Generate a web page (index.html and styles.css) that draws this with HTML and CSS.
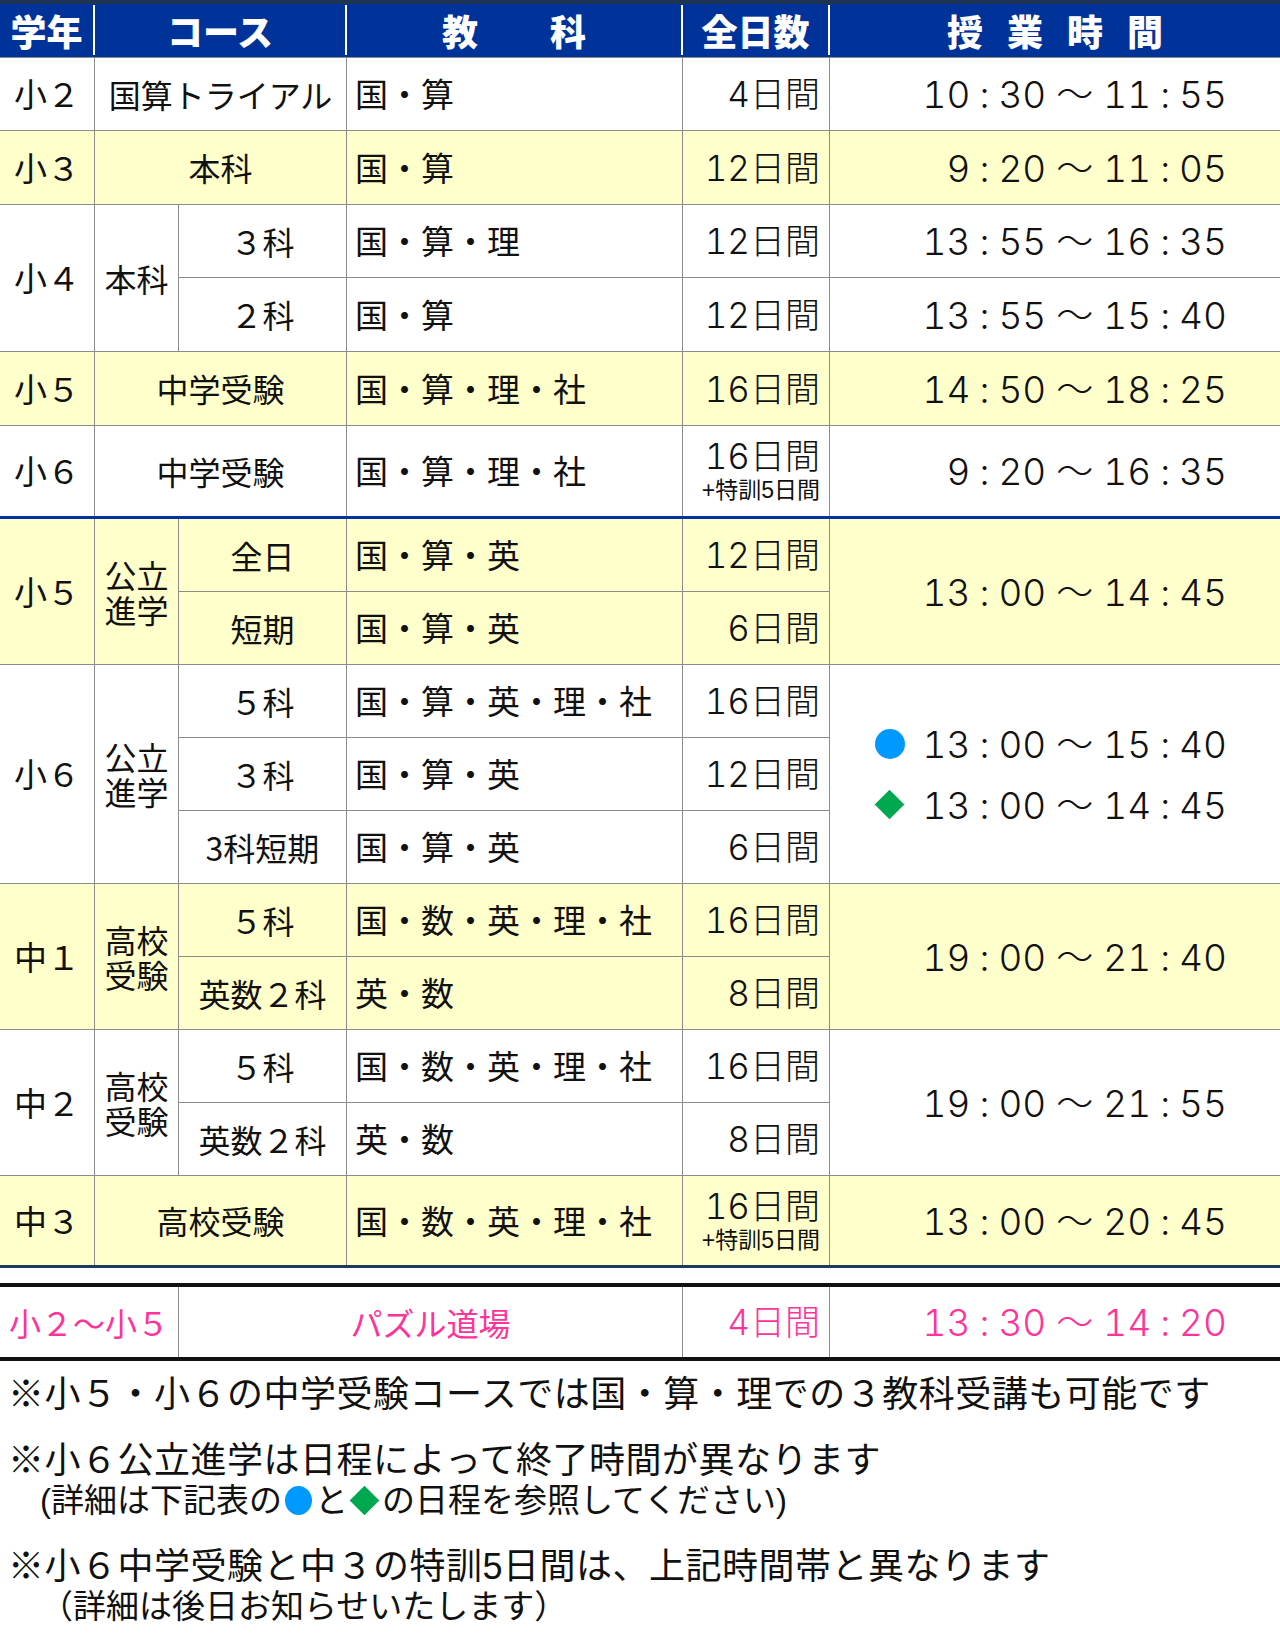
FILE: index.html
```html
<!DOCTYPE html>
<html lang="ja">
<head>
<meta charset="utf-8">
<title>授業時間</title>
<link rel="stylesheet" href="styles.css">
</head>
<body>
<div class="page">
  <div class="head">
    <div class="hc">学年</div>
    <div class="hc">コース</div>
    <div class="hc">教　　科</div>
    <div class="hc">全日数</div>
    <div class="hc last ls">授業時間</div>
  </div>

  <div class="grid">
    <!-- 小2 -->
    <div class="cell g">小２</div>
    <div class="cell c cs2">国算トライアル</div>
    <div class="cell s">国・算</div>
    <div class="cell d">4日間</div>
    <div class="cell t end"><span class="tm">10<span class="co">:</span>30<span class="wv">～</span>11<span class="co">:</span>55</span></div>
    <!-- 小3 -->
    <div class="cell g y">小３</div>
    <div class="cell c cs2 y">本科</div>
    <div class="cell s y">国・算</div>
    <div class="cell d y">12日間</div>
    <div class="cell t end y"><span class="tm">9<span class="co">:</span>20<span class="wv">～</span>11<span class="co">:</span>05</span></div>
    <!-- 小4 -->
    <div class="cell g rs2">小４</div>
    <div class="cell c rs2">本科</div>
    <div class="cell c">３科</div>
    <div class="cell s">国・算・理</div>
    <div class="cell d">12日間</div>
    <div class="cell t end"><span class="tm">13<span class="co">:</span>55<span class="wv">～</span>16<span class="co">:</span>35</span></div>
    <div class="cell c">２科</div>
    <div class="cell s">国・算</div>
    <div class="cell d">12日間</div>
    <div class="cell t end"><span class="tm">13<span class="co">:</span>55<span class="wv">～</span>15<span class="co">:</span>40</span></div>
    <!-- 小5 -->
    <div class="cell g y">小５</div>
    <div class="cell c cs2 y">中学受験</div>
    <div class="cell s y">国・算・理・社</div>
    <div class="cell d y">16日間</div>
    <div class="cell t end y"><span class="tm">14<span class="co">:</span>50<span class="wv">～</span>18<span class="co">:</span>25</span></div>
    <!-- 小6 -->
    <div class="cell g nb">小６</div>
    <div class="cell c cs2 nb">中学受験</div>
    <div class="cell s nb">国・算・理・社</div>
    <div class="cell d nb"><div class="dd"><div class="dm">16日間</div><div class="sm">+特訓5日間</div></div></div>
    <div class="cell t end nb"><span class="tm">9<span class="co">:</span>20<span class="wv">～</span>16<span class="co">:</span>35</span></div>

    <div class="sep sep-blue"></div>

    <!-- 小5 公立進学 -->
    <div class="cell g y rs2">小５</div>
    <div class="cell c y rs2"><div class="stack">公立進学</div></div>
    <div class="cell c y">全日</div>
    <div class="cell s y">国・算・英</div>
    <div class="cell d y">12日間</div>
    <div class="cell t end y rs2"><span class="tm">13<span class="co">:</span>00<span class="wv">～</span>14<span class="co">:</span>45</span></div>
    <div class="cell c y">短期</div>
    <div class="cell s y">国・算・英</div>
    <div class="cell d y">6日間</div>
    <!-- 小6 公立進学 -->
    <div class="cell g rs3">小６</div>
    <div class="cell c rs3"><div class="stack">公立進学</div></div>
    <div class="cell c">５科</div>
    <div class="cell s">国・算・英・理・社</div>
    <div class="cell d">16日間</div>
    <div class="cell t end rs3">
      <div class="tl2">
        <div class="tline"><span class="mk circ"></span><span class="tm">13<span class="co">:</span>00<span class="wv">～</span>15<span class="co">:</span>40</span></div>
        <div class="tline"><span class="mk dia"></span><span class="tm">13<span class="co">:</span>00<span class="wv">～</span>14<span class="co">:</span>45</span></div>
      </div>
    </div>
    <div class="cell c">３科</div>
    <div class="cell s">国・算・英</div>
    <div class="cell d">12日間</div>
    <div class="cell c">3科短期</div>
    <div class="cell s">国・算・英</div>
    <div class="cell d">6日間</div>
    <!-- 中1 -->
    <div class="cell g y rs2">中１</div>
    <div class="cell c y rs2"><div class="stack">高校受験</div></div>
    <div class="cell c y">５科</div>
    <div class="cell s y">国・数・英・理・社</div>
    <div class="cell d y">16日間</div>
    <div class="cell t end y rs2"><span class="tm">19<span class="co">:</span>00<span class="wv">～</span>21<span class="co">:</span>40</span></div>
    <div class="cell c y">英数２科</div>
    <div class="cell s y">英・数</div>
    <div class="cell d y">8日間</div>
    <!-- 中2 -->
    <div class="cell g rs2">中２</div>
    <div class="cell c rs2"><div class="stack">高校受験</div></div>
    <div class="cell c">５科</div>
    <div class="cell s">国・数・英・理・社</div>
    <div class="cell d">16日間</div>
    <div class="cell t end rs2"><span class="tm">19<span class="co">:</span>00<span class="wv">～</span>21<span class="co">:</span>55</span></div>
    <div class="cell c">英数２科</div>
    <div class="cell s">英・数</div>
    <div class="cell d">8日間</div>
    <!-- 中3 -->
    <div class="cell g y nb">中３</div>
    <div class="cell c cs2 y nb">高校受験</div>
    <div class="cell s y nb">国・数・英・理・社</div>
    <div class="cell d y nb"><div class="dd"><div class="dm">16日間</div><div class="sm">+特訓5日間</div></div></div>
    <div class="cell t end y nb"><span class="tm">13<span class="co">:</span>00<span class="wv">～</span>20<span class="co">:</span>45</span></div>

    <div class="sep sep-navy"></div>
  </div>

  <div class="puzzle">
    <div class="cell g cs2 nb">小２～小５</div>
    <div class="cell c cs2 nb">パズル道場</div>
    <div class="cell d nb">4日間</div>
    <div class="cell t end nb"><span class="tm">13<span class="co">:</span>30<span class="wv">～</span>14<span class="co">:</span>20</span></div>
  </div>

  <div class="notes">
    <div class="note">
      <p class="nm">※小５・小６の中学受験コースでは国・算・理での３教科受講も可能です</p>
    </div>
    <div class="note">
      <p class="nm">※小６公立進学は日程によって終了時間が異なります</p>
      <p class="ns ns1">(詳細は下記表の<span class="im circ-s"></span>と<span class="im dia-s"></span>の日程を参照してください)</p>
    </div>
    <div class="note">
      <p class="nm">※小６中学受験と中３の特訓5日間は、上記時間帯と異なります</p>
      <p class="ns ns2">（詳細は後日お知らせいたします）</p>
    </div>
  </div>
</div>
</body>
</html>
```

FILE: styles.css
```css
* { box-sizing: border-box; }

html, body {
  margin: 0;
  padding: 0;
  background: #ffffff;
}

body {
  width: 1280px;
  font-family: "Noto Sans CJK JP", "Noto Sans", sans-serif;
  color: #111111;
}

/* ---------- header ---------- */
.head {
  display: grid;
  grid-template-columns: 95px 252px 336px 147px 450px;
  height: 57px;
  border-top: 4px solid #1d3553;
  background: #003399;
  padding: 1px 0 2px;
}

.hc {
  display: flex;
  align-items: center;
  justify-content: center;
  border-right: 2px solid #ffffff;
  color: #ffffff;
  font-weight: 900;
  font-size: 36px;
  line-height: 1;
}

.hc.last { border-right: none; }

.ls {
  letter-spacing: 24px;
  padding-left: 24px;
}

/* ---------- main grid ---------- */
.grid {
  display: grid;
  grid-template-columns: 95px 84px 168px 336px 147px 450px;
  grid-template-rows: 73px 74px 73px 74px 74px 90px 3px repeat(9, 73px) 89px 3px;
  border-top: 1px solid #8c8c8c;
}

.cell {
  display: flex;
  align-items: center;
  border-right: 1px solid #8c8c8c;
  border-bottom: 1px solid #8c8c8c;
  font-size: 32px;
  line-height: 1.2;
  background: #ffffff;
}

.y { background: #ffffcc; }
.nb { border-bottom: none; }
.end { border-right: none; }
.cs2 { grid-column: span 2; }
.rs2 { grid-row: span 2; }
.rs3 { grid-row: span 3; }

.sep { grid-column: 1 / -1; }
.sep-blue { background: #0033a0; }
.sep-navy { background: #1f3a5f; }

.g {
  justify-content: center;
  font-size: 33px;
}

.c {
  justify-content: center;
  text-align: center;
}

.stack {
  width: 64px;
  line-height: 35px;
  word-break: break-all;
  text-align: left;
}

.s {
  padding-left: 8px;
  font-size: 33px;
}

.d {
  justify-content: flex-end;
  padding-right: 9px;
  font-family: "Inter", "Noto Sans CJK JP", sans-serif;
  font-weight: 300;
  font-variant-numeric: tabular-nums;
  font-size: 35px;
}

.dd {
  display: flex;
  flex-direction: column;
  align-items: flex-end;
}

.dm { line-height: 38px; }

.sm {
  font-family: "Liberation Sans", "Noto Sans CJK JP", sans-serif;
  font-weight: 400;
  font-size: 23px;
  line-height: 30px;
}

.t {
  justify-content: flex-end;
  padding-right: 53px;
  font-family: "Inter", "Noto Sans CJK JP", sans-serif;
  font-weight: 300;
  font-variant-numeric: tabular-nums;
  font-size: 37px;
}

.tm { white-space: nowrap; }

.co {
  margin: 0 9px;
}

.wv {
  font-family: "Noto Sans CJK JP", sans-serif;
  margin: 0 10px;
}

.tl2 {
  display: flex;
  flex-direction: column;
  gap: 18px;
}

.tline {
  display: flex;
  align-items: center;
  gap: 18px;
  line-height: 40px;
}

.mk { flex: none; }

.circ {
  width: 30px;
  height: 30px;
  border-radius: 50%;
  background: #0099ff;
}

.dia {
  width: 21px;
  height: 21px;
  margin: 0 4.5px;
  background: #00a84f;
  transform: rotate(45deg);
}

/* ---------- puzzle row ---------- */
.puzzle {
  display: grid;
  grid-template-columns: 95px 84px 168px 336px 147px 450px;
  grid-template-rows: 70px;
  margin-top: 15px;
  border-top: 4px solid #111111;
  border-bottom: 4px solid #111111;
}

.puzzle .cell { color: #ff3399; }
.puzzle .g { font-size: 32px; }

/* ---------- notes ---------- */
.notes {
  display: flex;
  flex-direction: column;
  gap: 26px;
  padding: 14px 0 0 8px;
  font-family: "Liberation Sans", "Noto Sans CJK JP", sans-serif;
}

.note p { margin: 0; }

.nm {
  font-size: 36px;
  line-height: 40px;
  letter-spacing: 0.5px;
}

.ns {
  font-size: 33px;
  line-height: 40px;
}

.ns1 { padding-left: 32px; }
.ns2 { padding-left: 32px; }

.im {
  display: inline-block;
}

.circ-s {
  width: 27px;
  height: 29px;
  margin: 0 3px;
  border-radius: 50%;
  background: #0099ff;
  vertical-align: -3px;
}

.dia-s {
  width: 21px;
  height: 21px;
  margin: 0 7px 0 6px;
  background: #00a84f;
  transform: rotate(45deg);
  vertical-align: 1px;
}
```
